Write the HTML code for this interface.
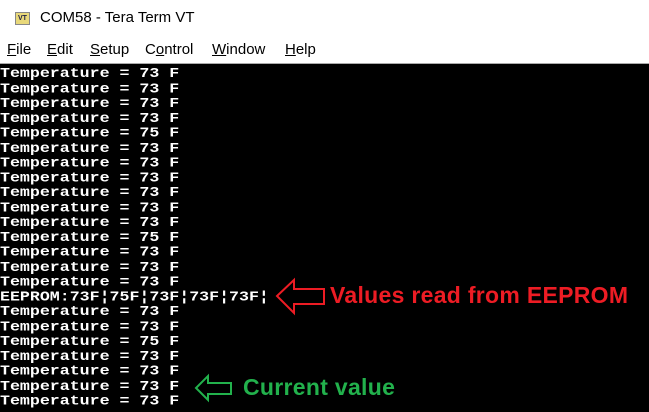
<!DOCTYPE html>
<html><head><meta charset="utf-8"><style>
body{margin:0;width:649px;height:411px;overflow:hidden;background:#fff;position:relative;font-family:"Liberation Sans",sans-serif}
.title{position:absolute;left:40px;top:9px;font-size:15px;color:#000}
.icon{position:absolute;left:15px;top:12px;width:13px;height:11px;background:#e8d87a;border:1px solid #888;font-size:7px;font-weight:bold;color:#224;text-align:center;line-height:11px}
.menu span{position:absolute;top:41px;font-size:15px;color:#000}
.menu u{text-decoration:underline}
.term{position:absolute;left:0;top:63px;width:649px;height:348px;background:#000;border-top:1px solid #aaa}
pre{margin:0;position:absolute;left:0;top:2px;font-family:"Liberation Mono",monospace;font-weight:bold;font-size:16.6px;line-height:17.5px;color:#fff;transform:scaleY(0.85);transform-origin:0 0;letter-spacing:0}
.lbl{position:absolute;font-weight:bold;font-size:23px;letter-spacing:0.3px}
</style></head><body>
<div class="icon">VT</div>
<div class="title">COM58 - Tera Term VT</div>
<div class="menu"><span style="left:7px"><u>F</u>ile</span><span style="left:47px"><u>E</u>dit</span><span style="left:90px"><u>S</u>etup</span><span style="left:145px">C<u>o</u>ntrol</span><span style="left:212px"><u>W</u>indow</span><span style="left:285px"><u>H</u>elp</span></div>
<div class="term">
<pre>Temperature = 73 F
Temperature = 73 F
Temperature = 73 F
Temperature = 73 F
Temperature = 75 F
Temperature = 73 F
Temperature = 73 F
Temperature = 73 F
Temperature = 73 F
Temperature = 73 F
Temperature = 73 F
Temperature = 75 F
Temperature = 73 F
Temperature = 73 F
Temperature = 73 F
EEPROM:73F¦75F¦73F¦73F¦73F¦
Temperature = 73 F
Temperature = 73 F
Temperature = 75 F
Temperature = 73 F
Temperature = 73 F
Temperature = 73 F
Temperature = 73 F</pre>
</div>
<svg style="position:absolute;left:0;top:0" width="649" height="411">
<path d="M277 296 L294 280 L294 289 L324 289 L324 304 L294 304 L294 313 Z" fill="none" stroke="#ed1c24" stroke-width="2"/>
<path d="M196 388 L208 376 L208 383 L231 383 L231 394 L208 394 L208 400 Z" fill="none" stroke="#22b14c" stroke-width="2"/>
</svg>
<div class="lbl" style="left:330px;top:282px;color:#ed1c24">Values read from EEPROM</div>
<div class="lbl" style="left:243px;top:374px;color:#22b14c">Current value</div>
</body></html>
